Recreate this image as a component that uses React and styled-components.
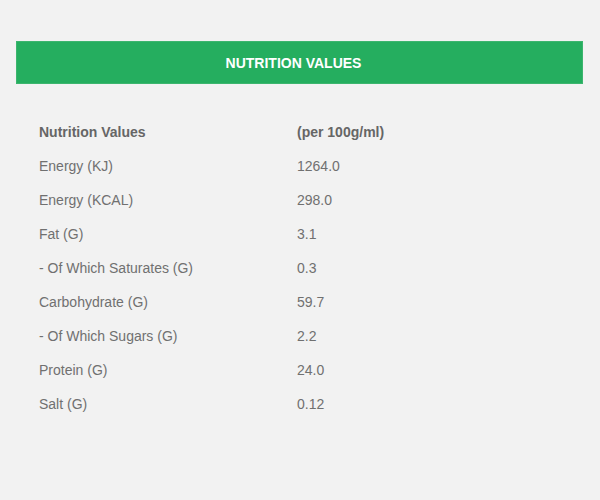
import React from "react";
import styled, { createGlobalStyle } from "styled-components";

const Global = createGlobalStyle`
  html, body { margin: 0; padding: 0; background: #f2f2f2; }
  body { font-family: "Liberation Sans", Arial, sans-serif; }
`;

const Page = styled.div`
  padding: 41px 17px 0 16px;
`;

const Bar = styled.div`
  height: 43px;
  background: #25ae5f;
  border: 1px solid #3cb56e;
  box-sizing: border-box;
  display: flex;
  align-items: center;
  justify-content: center;
  padding-right: 12px;
  color: #fff;
  font-weight: bold;
  font-size: 14px;
`;

const Table = styled.div`
  margin-top: 31px;
  padding-left: 23px;
  display: grid;
  grid-template-columns: 258px 1fr;
`;

const Cell = styled.div`
  height: 34px;
  display: flex;
  align-items: center;
  font-size: 14px;
  color: ${(p) => (p.$head ? "#666" : "#707070")};
  font-weight: ${(p) => (p.$head ? "bold" : "normal")};
`;

const rows = [
  ["Energy (KJ)", "1264.0"],
  ["Energy (KCAL)", "298.0"],
  ["Fat (G)", "3.1"],
  ["- Of Which Saturates (G)", "0.3"],
  ["Carbohydrate (G)", "59.7"],
  ["- Of Which Sugars (G)", "2.2"],
  ["Protein (G)", "24.0"],
  ["Salt (G)", "0.12"],
];

export default function App() {
  return (
    <>
      <Global />
      <Page>
        <Bar>NUTRITION VALUES</Bar>
        <Table>
          <Cell $head>Nutrition Values</Cell>
          <Cell $head>(per 100g/ml)</Cell>
          {rows.map(([k, v]) => (
            <React.Fragment key={k}>
              <Cell>{k}</Cell>
              <Cell>{v}</Cell>
            </React.Fragment>
          ))}
        </Table>
      </Page>
    </>
  );
}
